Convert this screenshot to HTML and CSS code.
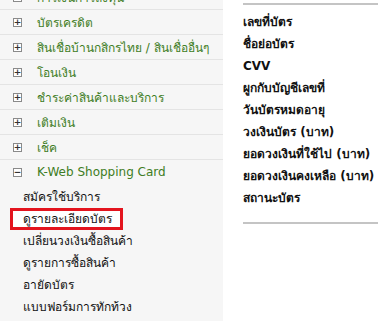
FILE: index.html
```html
<!DOCTYPE html>
<html lang="th">
<head>
  <meta charset="UTF-8" />
  <title>K-Web Shopping Card</title>
  <link rel="stylesheet" href="styles.css">
</head>
<body>
  <div class="page">
    <div class="menu">
      <div class="menu-item"><span class="toggle">+</span>การเงินการลงทุน</div>
      <div class="menu-item"><span class="toggle">+</span>บัตรเครดิต</div>
      <div class="menu-item"><span class="toggle">+</span>สินเชื่อบ้านกสิกรไทย / สินเชื่ออื่นๆ</div>
      <div class="menu-item"><span class="toggle">+</span>โอนเงิน</div>
      <div class="menu-item"><span class="toggle">+</span>ชำระค่าสินค้าและบริการ</div>
      <div class="menu-item"><span class="toggle">+</span>เติมเงิน</div>
      <div class="menu-item"><span class="toggle">+</span>เช็ค</div>
      <div class="menu-item open"><span class="toggle">&minus;</span>K-Web Shopping Card</div>
      <ul class="submenu">
        <li>สมัครใช้บริการ</li>
        <li class="marked">ดูรายละเอียดบัตร</li>
        <li>เปลี่ยนวงเงินซื้อสินค้า</li>
        <li>ดูรายการซื้อสินค้า</li>
        <li>อายัดบัตร</li>
        <li>แบบฟอร์มการทักท้วง</li>
      </ul>
    </div>

    <div class="details">
      <div class="field">เลขที่บัตร</div>
      <div class="field">ชื่อย่อบัตร</div>
      <div class="field">CVV</div>
      <div class="field">ผูกกับบัญชีเลขที่</div>
      <div class="field">วันบัตรหมดอายุ</div>
      <div class="field">วงเงินบัตร (บาท)</div>
      <div class="field">ยอดวงเงินที่ใช้ไป (บาท)</div>
      <div class="field">ยอดวงเงินคงเหลือ (บาท)</div>
      <div class="field">สถานะบัตร</div>
    </div>
  </div>
</body>
</html>
```

FILE: styles.css
```css
body {
  margin: 0;
  font-family: Tahoma, "DejaVu Sans", "Noto Sans", sans-serif;
  background: #fff;
  overflow: hidden;
}

.page {
  display: flex;
  align-items: flex-start;
  height: 321px;
}

/* left menu, scrolled a little so the first row is cut */
.menu {
  width: 223px;
  flex-shrink: 0;
  background: #f6f6f6;
  margin-top: -15px;
  height: 336px;
}

.menu-item {
  display: flex;
  align-items: center;
  height: 24px;
  border-bottom: 1px solid #e4e4e4;
  color: #3e7d24;
  font-size: 12px;
  white-space: nowrap;
  overflow: hidden;
}

.toggle {
  display: inline-flex;
  align-items: center;
  justify-content: center;
  width: 7px;
  height: 7px;
  margin: 0 15px 0 13px;
  border: 1px solid #8a8a8a;
  background: #fff;
  color: #333;
  font-size: 9px;
  line-height: 1;
  font-weight: bold;
}

.open {
  border-bottom: none;
}

.submenu {
  list-style: none;
  margin: 2px 0 0;
  padding: 0;
}

.submenu li {
  height: 22px;
  line-height: 22px;
  padding-left: 23px;
  font-size: 12px;
  color: #111;
}

.submenu li.marked {
  width: max-content;
  height: 16px;
  line-height: 16px;
  margin-left: 10px;
  padding: 0 8px 0 10px;
  border: 3px solid #e3141e;
  background: #fff;
}

/* card details */
.details {
  flex: 1;
  margin: 3px 0 0 20px;
  border-top: 2px solid #c4c4c4;
  border-bottom: 2px solid #c4c4c4;
  padding: 6px 0 13px;
}

.field {
  height: 22px;
  line-height: 22px;
  font-size: 12px;
  font-weight: bold;
  color: #111;
  white-space: nowrap;
}
```
